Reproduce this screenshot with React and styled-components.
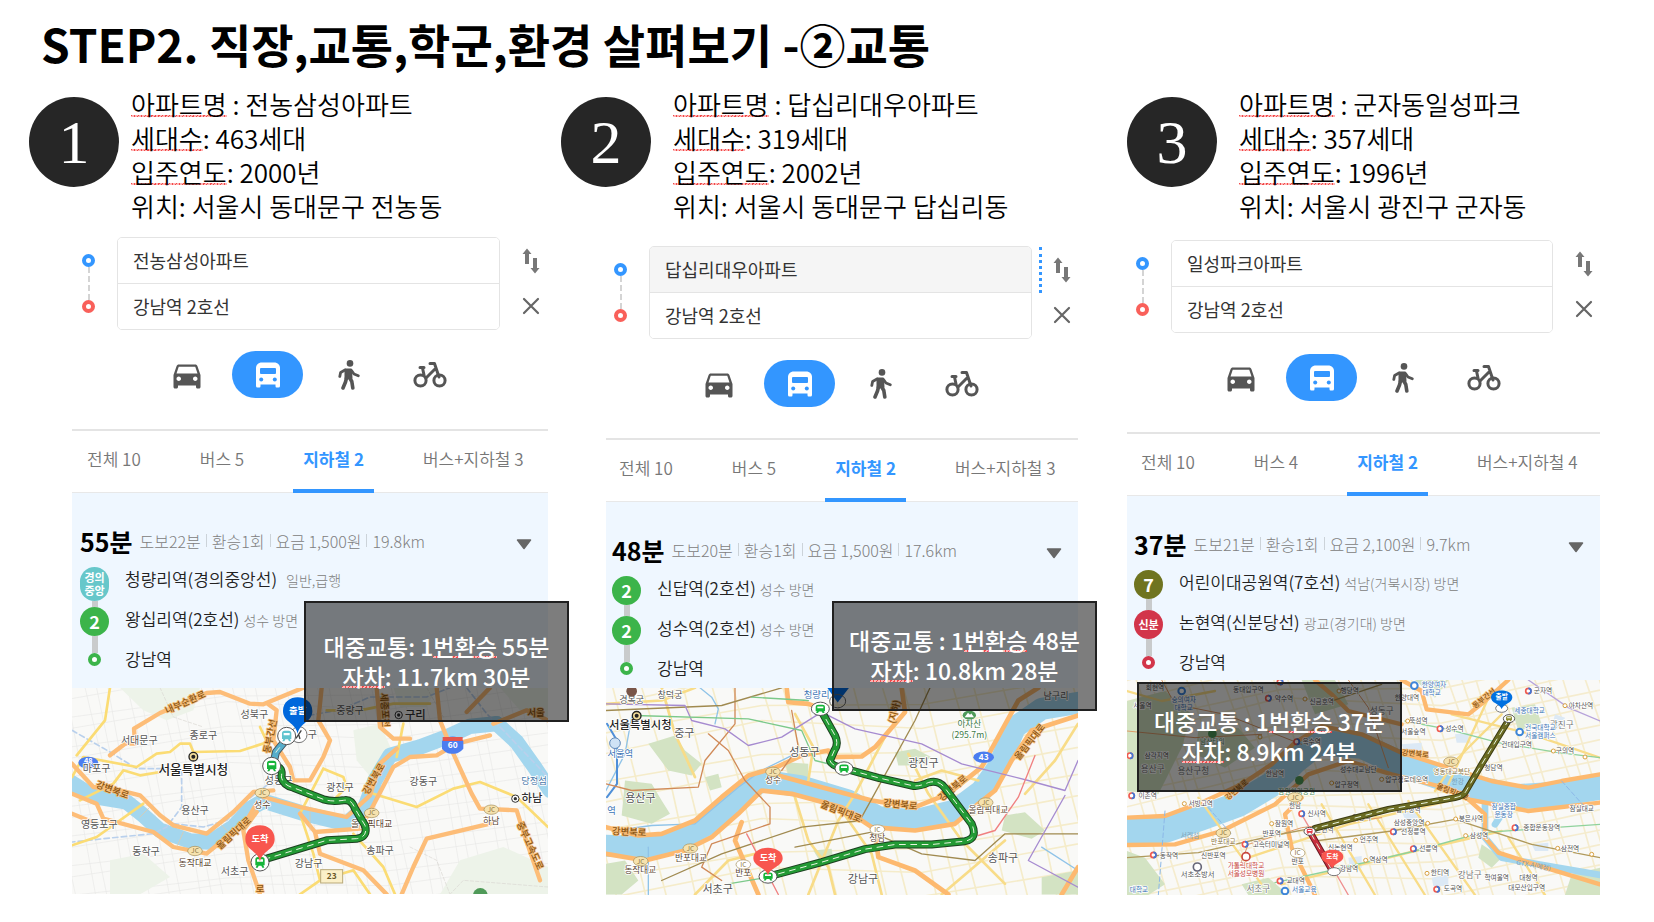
import React from "react";
import styled, { createGlobalStyle } from "styled-components";
import { MdDirectionsCar } from "react-icons/md";

const GlobalStyle = createGlobalStyle`
  * { box-sizing: border-box; }
  body {
    margin: 0;
    background: #fff;
    color: #000;
    font-family: "Noto Sans CJK KR", "Noto Sans", sans-serif;
  }
  button, input { font: inherit; color: inherit; border: 0; padding: 0; margin: 0; background: none; }
  button { cursor: pointer; }
`;

const Slide = styled.main`
  padding: 11px 0 24px 29px;
`;

const Title = styled.h1`
  margin: 0 0 12px 12px;
  font-size: 46px;
  line-height: 64px;
  font-weight: 700;
  white-space: nowrap;
`;

const Columns = styled.div`
  display: grid;
  grid-template-columns: 532fr 566fr 527fr;
  align-items: start;
`;

const Column = styled.section`
  min-width: 0;
`;

const Heading = styled.header`
  display: flex;
  align-items: flex-start;
  gap: ${(p) => p.$gap}px;
`;

const NumberDisc = styled.div`
  flex: none;
  display: flex;
  align-items: center;
  justify-content: center;
  width: 90px;
  height: 90px;
  margin-top: 10px;
  border-radius: 50%;
  background: #262626;
  color: #fff;
  font-family: "Liberation Serif", serif;
  font-size: 62px;
  line-height: 90px;
`;

const Facts = styled.div`
  font-size: 26px;
  line-height: 34px;
  font-weight: 350;
  white-space: nowrap;
`;

const Fact = styled.p`
  margin: 0;
`;

const Marked = styled.span`
  background: repeating-linear-gradient(120deg, #f04a4a 0 1px, #ffb4b4 1px 3px) 0 calc(100% - 5px) / 100% 2px no-repeat;
`;

const Panel = styled.div`
  position: relative;
  margin: ${(p) => p.$margin};
`;

const Search = styled.form`
  display: grid;
  grid-template-columns: ${(p) => 45 - p.$crop}px 1fr ${(p) => 48 - p.$crop}px;
  height: 93px;
`;

const Stops = styled.div`
  display: flex;
  flex-direction: column;
  align-items: center;
  justify-content: center;
  padding-right: ${(p) => 12 + p.$crop}px;
`;

const Ring = styled.span`
  flex: none;
  width: 13px;
  height: 13px;
  border: 4px solid ${(p) => p.$color};
  border-radius: 50%;
  background: #fff;
`;

const Dashes = styled.span`
  height: 33px;
  border-left: 2px dashed #d4d4d4;
`;

const Fields = styled.div`
  display: flex;
  flex-direction: column;
  border: 1px solid #e4e4e4;
  border-radius: 5px;
  overflow: hidden;
`;

const Field = styled.input`
  flex: 1;
  width: 100%;
  min-height: 0;
  padding: 0 15px 2px;
  font-size: 18px;
  line-height: 26px;
  color: #333;
  background: ${(p) => (p.$active ? "#f5f5f5" : "#fff")};
  & + & { border-top: 1px solid #e4e4e4; }
`;

const Actions = styled.div`
  display: grid;
  grid-template-rows: 1fr 1fr;
  padding: 1px 0 1px 7px;
`;

const Action = styled.button`
  display: flex;
  align-items: center;
  justify-content: center;
  padding-left: 4px;
  border-left: 3px dotted ${(p) => (p.$active ? "#3396ff" : "transparent")};
`;

const Modes = styled.div`
  display: flex;
  gap: 10px;
  padding: 21px 0 31px ${(p) => 79 - p.$crop}px;
`;

const Mode = styled.button`
  display: flex;
  align-items: center;
  justify-content: center;
  width: 71px;
  height: 47px;
  border-radius: 24px;
  background: ${(p) => (p.$active ? "#3396ff" : "transparent")};
  color: ${(p) => (p.$active ? "#fff" : "#555")};
`;

const Tabs = styled.div`
  display: flex;
  gap: 39px;
  height: 64px;
  padding-left: ${(p) => 5 - p.$crop}px;
  border-top: 2px solid #e4e4e4;
  border-bottom: 1px solid #e8e8e8;
`;

const Tab = styled.button`
  height: 62px;
  padding: 0 10px 2px;
  font-size: 17px;
  line-height: 24px;
  white-space: nowrap;
  font-weight: ${(p) => (p.$active ? 700 : 350)};
  color: ${(p) => (p.$active ? "#3396ff" : "#777")};
  border-bottom: 4px solid ${(p) => (p.$active ? "#3396ff" : "transparent")};
`;

const Result = styled.div`
  padding: 23px 0 ${(p) => p.$bottom}px ${(p) => 8 - p.$crop}px;
  background: #eff7ff;
`;

const Summary = styled.div`
  display: flex;
  align-items: center;
  height: 51px;
  padding: 0 16px 2px 0;
  white-space: nowrap;
`;

const Minutes = styled.strong`
  font-size: 25px;
  line-height: 32px;
  font-weight: 700;
`;

const Meta = styled.ul`
  display: flex;
  flex: 1;
  margin: 0;
  padding: 0 0 0 7px;
  list-style: none;
  font-size: 16px;
  line-height: 24px;
  font-weight: 300;
  color: #808080;
`;

const MetaItem = styled.li`
  display: flex;
  align-items: center;
  & + &::before {
    content: "";
    height: 13px;
    margin: 0 5px;
    border-left: 1px solid #ccd3d9;
  }
`;

const Expand = styled.button`
  display: flex;
  padding-top: 8px;
`;

const Steps = styled.ol`
  margin: 0;
  padding: 0;
  list-style: none;
`;

const Step = styled.li`
  display: flex;
  height: ${(p) => (p.$last ? 30 : 40)}px;
  gap: 16px;
  white-space: nowrap;
`;

const Track = styled.div`
  display: flex;
  flex-direction: column;
  align-items: center;
  width: 29px;
`;

const Line = styled.span`
  flex: ${(p) => (p.$short ? "0 0 6px" : "1")};
  width: 6px;
  background: #c9cbcc;
`;

const Badge = styled.span`
  display: flex;
  flex: none;
  align-items: center;
  justify-content: center;
  width: 29px;
  height: ${(p) => (p.$tall ? 34 : 29)}px;
  border-radius: 15px;
  background: ${(p) => p.$color};
  color: #fff;
  font-size: ${(p) => (p.$small ? 11 : 18)}px;
  line-height: 13px;
  font-weight: 700;
  text-align: center;
  white-space: pre;
`;

const Station = styled.span`
  font-size: 17px;
  line-height: 24px;
  font-weight: 350;
  color: #222;
`;

const Toward = styled.small`
  margin-left: ${(p) => (p.$wide ? 9 : 4)}px;
  font-size: 14px;
  font-weight: 300;
  color: #808080;
`;

const MapDrawing = styled.svg`
  display: block;
  width: 100%;
  height: ${(p) => p.$height}px;
  background: #f9f9f7;
`;

const Note = styled.aside`
  position: absolute;
  left: ${(p) => p.$left}px;
  bottom: ${(p) => p.$bottom}px;
  display: flex;
  flex-direction: column;
  align-items: center;
  justify-content: center;
  width: 265px;
  height: ${(p) => p.$height}px;
  padding-bottom: 2px;
  border: 2px solid #202020;
  background: rgba(0, 0, 0, 0.51);
  color: #fff;
  font-size: 23px;
  line-height: 30px;
  font-weight: 500;
  white-space: nowrap;
`;

/* ---------- icons ---------- */

const SwapIcon = () => (
  <svg width="18" height="26" viewBox="0 0 18 26" fill="#777" aria-hidden="true">
    <path d="M5 0.500 L9.500 6 H7 V16 H3 V6 H0.500 Z M13 25.500 L8.500 20 H11 V10 H15 V20 H17.500 Z" />
  </svg>
);

const CloseIcon = () => (
  <svg width="18" height="18" viewBox="0 0 18 18" stroke="#666" strokeWidth="2.200" strokeLinecap="round" aria-hidden="true">
    <path d="M2 2 L16 16 M16 2 L2 16" />
  </svg>
);

const BusIcon = () => (
  <svg width="24" height="26" viewBox="0 0 24 26" aria-hidden="true">
    <path fill="#fff" d="M6 0.500 H18 C22 0.500 24 3 24 6 V24 Q24 25.500 22.500 25.500 H20.500 Q19.500 25.500 19.500 24 V22.500 H4.500 V24 Q4.500 25.500 3.500 25.500 H1.500 Q0 25.500 0 24 V6 C0 3 2 0.500 6 0.500 Z" />
    <rect x="4" y="6" width="16" height="6" rx="1" fill="#3396ff" />
    <circle cx="5.200" cy="17.500" r="2" fill="#3396ff" />
    <circle cx="18.800" cy="17.500" r="2" fill="#3396ff" />
  </svg>
);

const WalkIcon = () => (
  <svg width="22" height="30" viewBox="0 0 22 30" fill="none" stroke="#555" strokeLinecap="round" strokeLinejoin="round" aria-hidden="true">
    <circle cx="12" cy="3.400" r="3.300" fill="#555" stroke="none" />
    <path fill="#555" strokeWidth="2" d="M7.500 9.500 H13 L13.500 18 L7.500 18.500 Z" />
    <path strokeWidth="2.800" d="M7 10 L2.600 12.500 L1.800 16.500 M13.500 10.500 L16 14 L20.300 15.800" />
    <path strokeWidth="3.600" d="M8.500 18 L7.500 22 L5 28 M11.500 17.500 L13.800 21.500 L14.800 28" />
  </svg>
);

const BikeIcon = () => (
  <svg width="36" height="28" viewBox="0 0 36 28" fill="none" stroke="#555" strokeWidth="3" strokeLinecap="round" strokeLinejoin="round" aria-hidden="true">
    <circle cx="8.500" cy="19.500" r="5.600" />
    <circle cx="27.500" cy="19.500" r="5.600" />
    <path d="M8 6.500 H12 M10.500 7 L12 14 M14 17 L23 8 M18 2.500 H22.500 L27 16" />
  </svg>
);

const ArrowIcon = () => (
  <svg width="16" height="11" viewBox="0 0 16 11" aria-hidden="true">
    <path d="M1.500 1 H14.500 L8 9.500 Z" fill="#666" stroke="#666" strokeWidth="1.500" strokeLinejoin="round" />
  </svg>
);

/* ---------- map pieces ---------- */

const Roads = ({ list, color, width, dash }) => (
  <g fill="none" stroke={color} strokeWidth={width} strokeLinecap="round" strokeLinejoin="round" strokeDasharray={dash}>
    {list.map((d) => (
      <path key={d} d={d} />
    ))}
  </g>
);

const Labels = ({ list, color = "#555", size = 30, weight = 400, halo = "#fff" }) => (
  <g fill={color} fontSize={size} fontWeight={weight} textAnchor="middle" stroke={halo} strokeWidth="5" paintOrder="stroke" strokeLinejoin="round">
    {list.map(([x, y, text, turn]) => (
      <text key={`${x}-${y}`} x={x} y={y} transform={turn ? `rotate(${turn} ${x} ${y})` : undefined}>
        {text}
      </text>
    ))}
  </g>
);

const Streets = ({ color, width, step, tilt }) => {
  const lines = [];
  for (let i = -6; i < 1700 / step + 6; i += 1) {
    const bend = ((i * 37) % 23) - 11;
    const x = i * step + bend;
    lines.push(`M${x - tilt} 0 L${x + bend} 330 L${x + tilt} 700`);
  }
  for (let j = -5; j < 900 / step + 3; j += 1) {
    const bend = ((j * 29) % 19) - 9;
    const y = j * step + bend;
    lines.push(`M0 ${y + tilt} L500 ${y + bend * 2} L980 ${y - bend} L1500 ${y - tilt}`);
  }
  return <Roads list={lines} color={color} width={width} />;
};

const Route = ({ d, color, edge, width = 18 }) => (
  <g fill="none" strokeLinejoin="round" strokeLinecap="round">
    <path d={d} stroke={edge} strokeWidth={width + 6} />
    <path d={d} stroke={color} strokeWidth={width} />
    <path d={d} stroke="#e8f5e0" strokeWidth="3" strokeDasharray="20 14" strokeLinecap="butt" />
  </g>
);

const StopMark = ({ x, y, color = "#16b53a", rx = 27, ry = 26 }) => (
  <g>
    <ellipse cx={x} cy={y} rx={rx} ry={ry} fill="#fff" stroke="#555" strokeWidth="3" />
    <path transform={`translate(${x} ${y}) scale(${rx / 27} ${ry / 26})`} fill={color} d="M-14 -8 Q-14 -16 -6 -16 H6 Q14 -16 14 -8 V9 H10 L13 16 H7 L4 10 H-4 L-7 16 H-13 L-10 9 H-14 Z M-9 -9 V-2 H9 V-9 Z" fillRule="evenodd" />
  </g>
);

const Pin = ({ x, y, color, label, size = 28, w = 44, h = 110 }) => (
  <g>
    <path
      fill={color}
      d={`M${x} ${y} C${x - 6} ${y - h * 0.3} ${x - w} ${y - h * 0.32} ${x - w} ${y - h * 0.62} C${x - w} ${y - h * 1.12} ${x + w} ${y - h * 1.12} ${x + w} ${y - h * 0.62} C${x + w} ${y - h * 0.32} ${x + 6} ${y - h * 0.3} ${x} ${y} Z`}
    />
    <text x={x} y={y - h * 0.62 + size * 0.3} fill="#fff" fontSize={size} fontWeight="700" textAnchor="middle">
      {label}
    </text>
  </g>
);

const Junctions = ({ list }) => (
  <g textAnchor="middle" fontSize="20" fill="#8a7440">
    {list.map(([x, y, text]) => (
      <g key={`${x}-${y}`}>
        <ellipse cx={x} cy={y} rx="22" ry="14" fill={text === "JC" ? "#f6e2ae" : "#fff"} stroke="#a08b58" strokeWidth="2" />
        <text x={x} y={y + 7}>{text}</text>
      </g>
    ))}
  </g>
);

const Patches = ({ list, color }) => (
  <g fill={color}>
    {list.map((d) => (
      <path key={d} d={d} />
    ))}
  </g>
);

const CityHall = ({ x, y }) => (
  <g>
    <circle cx={x} cy={y} r="13" fill="#f2dc9a" stroke="#222" strokeWidth="4" />
    <circle cx={x} cy={y} r="6" fill="#222" />
  </g>
);

const MapWide = () => (
  <MapDrawing $height={206} viewBox="36 22 1428 620" preserveAspectRatio="xMidYMid slice" role="img" aria-label="전농삼성아파트에서 강남역까지의 경로 지도">
    <Streets color="#e9e9e7" width={2} step={44} tilt={70} />
    <Patches
      color="#edf3e9"
      list={[
        "M180 22 H420 L400 90 L320 120 L250 90 Z",
        "M880 150 L960 130 L1000 220 L940 300 L890 240 Z",
        "M1000 22 H1130 L1100 80 H1020 Z",
        "M1200 540 L1330 500 L1464 560 V642 H1140 Z",
        "M150 540 L250 520 L330 590 L240 642 H150 Z",
        "M1320 22 H1464 V110 L1380 90 Z",
      ]}
    />
    <Roads
      color="#a3d6ee"
      width={46}
      list={[
        "M10 292 L100 348 L200 365 L250 405 L300 450 L390 482 L450 485 L520 440 L570 385 L610 362 L740 402 L860 430 L915 380 L945 300 L990 225 L1080 200 L1160 170 L1230 138 L1310 130",
        "M1310 130 L1370 185 L1420 255 L1470 330",
      ]}
    />
    <Roads color="#b9d0ec" width={5} dash="16 10" list={["M36 150 L150 215 L230 265 L365 265 V380 L320 440 L280 460 L180 470 L36 485", "M340 430 L430 440 L500 420 L560 360 L640 300", "M860 80 L930 50 H1100 L1170 22", "M1220 22 L1280 100 L1330 150 L1464 290", "M720 110 L860 85"]} />
    <Roads color="#d9d7d2" width={2} dash="10 6" list={["M300 22 L340 110 L430 140", "M1050 500 L1130 540 L1170 642", "M1464 620 L1210 600 L1170 642", "M1100 22 L1150 110"]} />
    <Roads
      color="#fbdc74"
      width={8}
      list={[
        "M150 22 L135 120 L50 225",
        "M36 290 L70 230 L230 260 L290 220 L330 215 L360 190 H390 L400 215 L540 212 L640 180",
        "M60 360 L160 310 L190 270 L240 285 L300 275",
        "M36 495 L110 470 L250 370",
        "M640 225 L600 140",
        "M790 265 L850 290 L860 320 L820 360",
        "M790 265 L720 400 L760 520 L780 600 L720 642",
        "M880 460 L970 560 L1005 642",
        "M940 340 L1070 380 L1180 325 L1260 305 L1370 350 L1464 440",
        "M800 90 H900 L1000 70 H1110",
        "M1030 130 L1010 230",
        "M780 600 L880 570 L930 642",
      ]}
    />
    <Roads
      color="#fdbd78"
      width={13}
      list={[
        "M150 225 L195 190 H225 L222 145 L300 98 L440 38 L480 35 L570 70 L610 72 L730 22",
        "M625 72 L650 90 L640 180 L690 260 L700 300 L750 300 L790 230 L810 180 L775 120 L785 22",
        "M36 250 L100 320 L180 330 L240 345 L300 405 L340 435 L440 460 L520 395 L580 335 L640 330",
        "M36 340 L110 370 L130 415 L280 455 L340 500 L440 520 L560 420 L590 370",
        "M36 400 L110 430",
        "M610 350 L720 380 L860 410 L930 345 L960 250 L1010 205",
        "M720 400 L765 455 L900 445 L940 375 L1000 260 L1050 230 L1130 225 L1190 190 L1290 165",
        "M765 455 L780 520 L910 570 L980 642",
        "M590 395 L550 450 L565 540 L600 642",
        "M1130 22 L1140 120 L1180 220 L1235 340 L1260 385 L1370 390 L1395 470 L1440 600",
        "M1290 430 L1100 475 L1060 560 L1025 642",
        "M950 22 L960 140 L1000 175 H1050",
        "M1220 95 L1290 22",
        "M1300 130 L1400 90 L1464 120",
      ]}
    />
    <Roads color="#e8c9a0" width={2} list={["M750 395 V450", "M240 410 L270 380", "M480 430 L520 470", "M370 455 L350 500"]} />
    <Labels color="#8a5412" size={28} weight={500} halo="#f7c07c" list={[[380, 75, "내부순환로", -24], [154, 338, "강변북로", 20], [528, 466, "올림픽대로", -42], [950, 300, "강변북로", -60], [640, 170, "동부간선", -78], [965, 90, "세종포천", 86], [1402, 500, "중부고속도로", 66], [1428, 106, "서울"], [600, 634, "로"]]} />
    <ellipse cx="85" cy="247" rx="30" ry="18" fill="#4b7df0" />
    <text x="85" y="252" fill="#fff" fontSize="22" fontWeight="700" textAnchor="middle">48</text>
    <Labels list={[[583, 112, "성북구"], [430, 175, "종로구"], [238, 192, "서대문구"], [110, 276, "마포구"], [405, 402, "용산구"], [118, 443, "영등포구"], [258, 524, "동작구"], [524, 584, "서초구"], [746, 560, "강남구"], [840, 332, "광진구"], [1090, 314, "강동구"], [960, 520, "송파구"], [656, 312, "성동구"], [870, 102, "중랑구"], [757, 172, "구"]]} />
    <Labels color="#5b4632" size={27} list={[[607, 382, "성수"], [405, 556, "동작대교"], [1294, 432, "하남"], [935, 440, "올림픽대교"]]} />
    <Labels color="#4a78a8" size={28} list={[[1422, 312, "당정섬"]]} />
    <Labels color="#222" size={38} weight={500} list={[[400, 280, "서울특별시청"]]} />
    <Labels color="#333" size={34} weight={500} list={[[1416, 366, "하남"], [1066, 115, "구리"]]} />
    <g fill="#fff" stroke="#333" strokeWidth="3">
      <circle cx="1366" cy="355" r="11" />
      <circle cx="1016" cy="104" r="11" />
    </g>
    <g fill="#333">
      <circle cx="1366" cy="355" r="5" />
      <circle cx="1016" cy="104" r="5" />
    </g>
    <CityHall x={400} y={229} />
    <Junctions list={[[607, 338, "JC"], [405, 512, "JC"], [935, 398, "JC"], [1294, 388, "JC"]]} />
    <path d="M1146 182 Q1178 155 1210 182 V205 Q1195 222 1178 220 Q1160 222 1146 205 Z" fill="#4b7df0" />
    <path d="M1148 170 H1208 V182 H1148 Z" fill="#e4574d" />
    <text x="1178" y="204" fill="#fff" fontSize="25" fontWeight="700" textAnchor="middle">60</text>
    <rect x="782" y="568" width="66" height="40" fill="#fbf0c8" stroke="#b8a878" strokeWidth="3" />
    <text x="815" y="597" fontSize="25" fontWeight="700" textAnchor="middle" fill="#6b5a2a">23</text>
    <circle cx="1261" cy="645" r="22" fill="#4f9a58" />
    <Route d="M640 250 L648 215 L685 170" color="#56aecb" edge="#45545e" />
    <Route d="M645 258 Q670 260 664 290 Q670 315 700 322 L790 357 Q815 365 850 360 Q875 355 885 385 L915 435 Q925 470 890 475 L800 480 L620 535" color="#239a34" edge="#1c4020" />
    <circle cx="717" cy="163" r="24" fill="#fff" stroke="#777" strokeWidth="3" />
    <path d="M724 150 L716 162 L720 176 M716 162 L708 174" fill="none" stroke="#444" strokeWidth="4" />
    <StopMark x={680} y={167} color="#62c5cf" />
    <StopMark x={635} y={257} />
    <StopMark x={600} y={546} />
    <Pin x={713} y={160} color="#0068dc" label="출발" />
    <Pin x={600} y={544} color="#f8564e" label="도착" />
  </MapDrawing>
);

const MapNear = () => (
  <MapDrawing $height={207} viewBox="33 22 1416 622" preserveAspectRatio="xMidYMid slice" role="img" aria-label="답십리대우아파트에서 강남역까지의 경로 지도">
    <Streets color="#f5ecca" width={5} step={72} tilt={90} />
    <Patches
      color="#d3e3c3"
      list={[
        "M160 190 L240 165 L270 210 L320 250 L290 285 L220 270 Z",
        "M90 300 L170 310 L200 360 L225 400 L170 430 L80 405 Z",
        "M570 245 L640 250 V305 L580 285 Z",
        "M900 215 L960 205 L1010 230 L960 255 H910 Z",
        "M1230 405 L1290 395 L1350 450 L1310 475 L1220 450 Z",
        "M33 550 L90 540 L130 600 L80 642 H33 Z",
        "M330 290 L370 280 L380 320 L345 330 Z",
        "M1340 590 L1449 570 V642 H1340 Z",
        "M655 510 L710 505 L715 540 L670 535 Z",
      ]}
    />
    <Roads color="#a3d6ee" width={66} list={["M10 495 L170 500 L250 480 L340 430 L420 360 L500 300 L620 318 L760 360 L850 410 L960 420 L1080 390 L1160 330 L1210 260 L1260 140 L1340 85 L1460 65"]} />
    <Roads color="#8fc3e8" width={4} list={["M33 330 L90 220 L110 110", "M60 450 L170 435 L300 430 L430 320 L500 270 L600 220", "M160 500 V642", "M315 22 L350 50 L370 85 L360 130", "M1449 570 L1340 500"]} />
    <Roads color="#4f8fd8" width={6} list={["M36 130 L66 180 V310 L36 350"]} />
    <Roads
      color="#f8dc88"
      width={8}
      list={["M880 150 L780 340 L730 420 L640 642", "M940 220 L1000 340 L1100 480 L1230 610", "M640 300 L655 200 L600 100", "M600 350 L640 480 L700 560 L720 642", "M740 390 L830 520 L860 642", "M1230 480 L1040 642", "M33 70 L200 60 L300 22", "M200 22 L240 160 L300 290", "M960 300 L1040 270 L1150 300", "M1449 130 L1380 240 L1290 340", "M300 642 L400 540 L520 510"]}
    />
    <Roads
      color="#fdb96f"
      width={14}
      list={[
        "M33 440 L130 465 L200 460 L300 420 L380 350 L460 285 L540 262 L620 225 L700 210 L710 230 L800 228 L840 200 L930 95 L920 22",
        "M33 520 L150 540 L270 510 L350 470 L430 400 L500 330 L590 340 L740 380 L830 440 L960 450 L1080 430 L1150 370 L1200 330 L1250 240 L1310 150 L1449 105",
        "M530 280 L680 320 L830 360 L960 380 L1060 340 L1160 260 L1220 150 L1270 60 L1330 22",
        "M575 22 L580 65 L640 70 L680 85",
        "M440 425 L420 480 L490 642",
        "M840 455 L850 530 L960 570 L1060 642",
        "M1449 560 L1400 642",
      ]}
    />
    <Roads color="#d08a58" width={4} list={["M420 22 V130 L330 240 L310 320 L110 330 L33 310", "M340 160 L400 210 L450 300 L525 380 V430 L350 490 L320 560 L380 600", "M590 90 L610 200 L560 270"]} />
    <Roads color="#a08a50" width={4} list={["M33 90 L380 75 L560 22", "M1005 22 L960 120 L800 410", "M200 600 L380 520 L620 440 L800 420", "M600 500 L830 455 L980 520 L1140 540 L1230 460 H1449"]} />
    <Roads color="#a68bd0" width={4} list={["M33 70 L270 75 L290 120 L390 145 L460 195 L560 170 L680 95 L780 145 L980 190 L1100 250 L1300 300 L1410 330 L1449 240", "M1410 345 L1300 540 L1449 620"]} />
    <Roads color="#7cc98a" width={4} list={["M120 105 L460 115 L620 150 L660 240 L720 255", "M400 610 L520 590", "M470 50 L640 60"]} />
    <Roads color="#f08080" width={4} list={["M1320 225 L1270 350 L1200 450 L1150 465", "M455 460 L550 642"]} />
    <Labels color="#8a5412" size={28} weight={500} halo="#f7c07c" list={[[102, 464, "강변북로", 3], [735, 402, "올림픽대로", 22], [915, 382, "강변북로", 6], [1080, 330, "강변북로", -40], [1312, 190, "올림픽대로", -52], [908, 96, "(지하)", -76]]} />
    <Labels size={33} list={[[268, 170, "중구"], [136, 364, "용산구"], [628, 226, "성동구"], [985, 258, "광진구"], [1224, 544, "송파구"], [804, 608, "강남구"], [368, 638, "서초구"]]} />
    <Labels size={27} list={[[110, 68, "경복궁"], [225, 53, "창덕궁"], [1383, 56, "남구리"]]} />
    <Labels color="#5b4632" size={26} list={[[534, 308, "성수"], [288, 540, "반포대교"], [136, 576, "동작대교"], [445, 586, "반포"], [847, 480, "청담"], [1180, 398, "올림픽대교"]]} />
    <Labels color="#3b74b5" size={28} list={[[76, 228, "서울역"], [665, 52, "청량리"], [50, 400, "역"]]} />
    <Labels color="#3d7a45" size={26} list={[[1123, 140, "아차산"], [1123, 172, "(295.7m)"]]} />
    <Labels color="#222" size={34} weight={500} list={[[136, 145, "서울특별시청"]]} />
    <CityHall x={125} y={106} />
    <Junctions list={[[534, 274, "JC"], [286, 504, "JC"], [137, 542, "JC"], [1172, 366, "JC"], [445, 552, "IC"], [847, 447, "IC"]]} />
    <ellipse cx="1123" cy="104" rx="20" ry="13" fill="#4f9a58" />
    <path d="M1109 110 L1119 97 L1125 103 L1129 99 L1137 110 Z" fill="#fff" />
    <circle cx="110" cy="32" r="16" fill="#795548" />
    <ellipse cx="1166" cy="230" rx="31" ry="17" fill="#4b7df0" />
    <text x="1166" y="239" fill="#fff" fontSize="25" fontWeight="700" textAnchor="middle">43</text>
    <circle cx="60" cy="188" r="16" fill="#cfe2f5" stroke="#5d87b8" strokeWidth="3" />
    <path d="M697 22 H762 L728 66 Z" fill="#0068dc" />
    <ellipse cx="728" cy="62" rx="24" ry="20" fill="none" stroke="#666" strokeWidth="3" />
    <Route d="M676 86 L720 165 Q732 190 718 210 L705 240 Q708 256 748 264 L850 292 L950 315 Q970 320 1000 306 Q1030 298 1048 320 L1130 430 Q1150 475 1110 482 L1010 492 L900 492 L810 506 L680 545 L520 588" color="#239a34" edge="#1c4020" />
    <StopMark x={676} y={85} ry={20} />
    <StopMark x={747} y={264} ry={20} />
    <StopMark x={519} y={588} ry={20} />
    <Pin x={519} y={585} color="#f8564e" label="도착" size={27} h={84} />
  </MapDrawing>
);

const MapDense = () => (
  <MapDrawing $height={215} viewBox="36 27 1419 645" preserveAspectRatio="xMidYMid slice" role="img" aria-label="일성파크아파트에서 강남역까지의 경로 지도">
    <Streets color="#f5ecce" width={5} step={52} tilt={110} />
    <Patches
      color="#d3e3c3"
      list={[
        "M36 90 L150 60 L230 130 L200 230 L130 370 L36 360 Z",
        "M250 180 L370 170 L420 230 L330 290 L240 250 Z",
        "M36 540 L90 560 L150 640 L100 672 H36 Z",
        "M1190 110 L1260 100 L1280 160 L1210 180 Z",
        "M560 27 H660 L700 100 L600 130 Z",
        "M900 27 H1000 L960 80 Z",
        "M1100 520 L1160 560 L1130 590 L1090 560 Z",
        "M1370 610 L1455 590 V672 H1350 Z",
        "M380 640 L460 620 L520 672 H400 Z",
      ]}
    />
    <Patches color="#dce9f5" list={["M860 220 L920 215 V245 H870 Z", "M1130 70 L1170 68 V95 H1135 Z", "M1320 130 L1350 140 L1340 170 H1310 Z", "M860 420 L900 410 L910 440 L870 445 Z", "M700 560 L740 555 V590 H705 Z", "M1250 520 L1300 515 V540 H1260 Z", "M1020 190 L1060 185 V215 H1025 Z", "M400 590 H450 V615 H405 Z", "M950 620 L1000 610 V645 H955 Z"]} />
    <Roads color="#a3d6ee" width={76} list={["M0 480 L150 478 L260 440 L370 400 L470 340 L540 270 L610 215 L740 225 L860 280 L980 320 L1080 350 L1200 378 L1320 370 L1480 345"]} />
    <Roads color="#a3d6ee" width={20} list={["M1110 400 V500 L1160 560 L1270 580 L1455 612", "M1180 400 L1140 460"]} />
    <Roads
      color="#f8dc88"
      width={7}
      list={["M1160 130 L1020 270 L960 360", "M1130 60 L1000 340", "M620 400 L780 672", "M760 400 L930 672", "M880 390 L1080 672", "M400 560 L700 460 L1000 390", "M500 640 L900 540 L1160 480", "M1180 500 L1290 672", "M1010 130 L1250 190 L1455 260", "M36 60 L140 90 L300 60", "M250 380 L440 640"]}
    />
    <Roads
      color="#fdb96f"
      width={13}
      list={[
        "M36 440 L150 435 L270 390 L380 340 L470 280 L540 215 L620 165 L740 190 L860 245 L1000 290 L1130 330 L1240 350 L1340 330 L1455 310",
        "M36 522 L180 520 L320 480 L480 400 L580 310 L700 270 L830 310 L970 345 L1060 385 L1110 430 L1110 500 L1150 545 L1290 590 L1455 640",
        "M860 27 L920 60 L935 115 L1060 130 L1110 90 L1180 27",
        "M560 380 L510 430 L530 530 L600 672",
        "M600 27 L650 70 L700 120 L860 160",
        "M1060 385 L1240 420 L1455 395",
      ]}
    />
    <Roads color="#dd9a68" width={3} list={["M140 27 L180 100 L330 130 L560 220", "M360 620 L400 520 L560 470 L800 440", "M700 27 L760 110 L820 290", "M36 180 L240 200 L440 190"]} />
    <Roads color="#8fd29c" width={4} list={["M480 635 L640 600 L900 540 L1100 485 L1455 460", "M870 150 L1000 175 L1150 215 L1330 245 L1455 260"]} />
    <Roads color="#b09a5c" width={4} list={["M36 560 L250 545 L470 495 L600 470", "M600 510 L830 480 L1020 445 L1250 520 L1455 560", "M620 100 L800 40"]} />
    <Roads color="#ef8f8f" width={4} list={["M560 430 L700 672"]} />
    <Roads color="#b7a3da" width={4} list={["M1240 27 L1360 110 L1455 150"]} />
    <Roads color="#8cb8e8" width={3} dash="14 8" list={["M150 420 L130 672", "M280 410 L350 490", "M1340 330 L1420 420"]} />
    <Labels color="#8a5412" size={22} weight={500} halo="#f7c07c" list={[[900, 256, "강변북로", 6], [1010, 370, "올림픽대로", 22], [1112, 88, "동부간선", -38], [370, 362, "강변북로", -40]]} />
    <Labels
      size={20}
      list={[[1284, 66, "군자역"], [1398, 112, "아차산역"], [1018, 180, "성수역"], [910, 156, "뚝섬역"], [895, 190, "서울숲역"], [1205, 228, "건대입구역"], [1350, 247, "구의역"], [876, 88, "한양대역"], [605, 436, "신사역"], [507, 466, "잠원역"], [470, 495, "반포역"], [468, 527, "고속터미널역"], [895, 490, "선정릉역"], [882, 463, "삼성중앙역"], [762, 514, "언주역"], [676, 538, "신논현역"], [940, 539, "선릉역"], [702, 599, "강남역"], [790, 574, "역삼역"], [1068, 450, "봉은사역"], [1280, 477, "종합운동장역"], [1092, 501, "삼성역"], [1365, 540, "삼전역"], [162, 560, "동작역"], [295, 562, "신반포역"], [542, 637, "교대역"], [1014, 660, "도곡역"], [975, 613, "한티역"], [1145, 626, "학여울역"], [1240, 626, "대청역"], [1235, 656, "대모산입구역"], [880, 424, "압구정역"], [1135, 297, "청담역"], [740, 446, "학동역"], [257, 404, "서빙고역"], [98, 380, "이촌역"], [120, 58, "회현역"], [82, 112, "서울역"], [400, 64, "동대입구역"], [507, 90, "약수역"], [620, 98, "신금호역"], [704, 66, "행당역"], [125, 262, "삼각지역"], [480, 316, "한남역"], [590, 220, "옥수역"], [695, 348, "압구정역"], [875, 334, "압구정로데오역"], [730, 302, "성수대교남단"], [540, 412, "한남"], [548, 580, "반포"], [628, 482, "논현역"], [1400, 420, "잠실대교"]]}
    />
    <Labels color="#777" size={26} list={[[113, 304, "용산구"], [235, 308, "용산구청"], [1340, 172, "광진구"], [1064, 620, "강남구"], [430, 662, "서초구"], [800, 128, "성동구"]]} />
    <Labels color="#8a7440" size={20} list={[[325, 518, "반포대교"], [1010, 308, "영동대교북단"]]} />
    <Labels color="#3b74b5" size={20} list={[[957, 48, "한양여자"], [950, 72, "대학교"], [1244, 126, "세종대학교"], [1276, 178, "건국대학교"], [1276, 202, "서울캠퍼스"], [1166, 414, "잠실종합"], [1166, 438, "운동장"], [568, 664, "서울교육"], [72, 662, "대학교"], [206, 92, "숭의여자"], [206, 116, "대학교"]]} />
    <Labels color="#7aa0b8" size={20} halo="none" list={[[1028, 338, "한강"], [225, 500, "서래섬"], [1255, 590, "GTX-A(예정)", 10]]} />
    <Labels color="#c8473f" size={20} list={[[393, 590, "가톨릭대학교"], [393, 614, "서울성모병원"]]} />
    <Labels color="#4d8a55" size={20} list={[[545, 370, "잠원한강공원"], [292, 218, "남산타워"]]} />
    <Labels size={22} list={[[248, 618, "서초소방서"]]} />
    <g strokeWidth="5" fill="#fff">
      {[[1240, 60], [975, 173], [560, 428], [835, 482], [390, 520], [895, 533], [1200, 470], [115, 552], [495, 630], [965, 655], [460, 82], [495, 33], [50, 374], [45, 254], [545, 212]].map(([x, y]) => (
        <g key={`${x}-${y}`}>
          <circle cx={x} cy={y} r="8" stroke="#ef5b50" />
          <path d={`M${x} ${y - 8} A8 8 0 0 1 ${x} ${y + 8}`} fill="none" stroke="#3f78d8" />
        </g>
      ))}
    </g>
    <g fill="#fff" stroke="#d8a040" strokeWidth="3">
      {[[1315, 240], [1410, 258], [1350, 104], [878, 150], [470, 458], [722, 508], [1022, 444], [1052, 494], [938, 457], [1328, 532], [752, 568], [936, 607], [1430, 550], [208, 398], [672, 60], [570, 84], [435, 198], [650, 336], [800, 325]].map(([x, y]) => (
        <circle key={`${x}-${y}`} cx={x} cy={y} r="6" />
      ))}
    </g>
    <g fill="#fff" stroke="#3f86d8" strokeWidth="6">
      <circle cx="898" cy="44" r="10" />
      <circle cx="1214" cy="183" r="10" />
      <circle cx="510" cy="660" r="10" />
      <circle cx="200" cy="60" r="10" />
    </g>
    <circle cx="393" cy="557" r="12" fill="#fff" stroke="#c8473f" strokeWidth="5" />
    <circle cx="553" cy="328" r="13" fill="#4f9a58" />
    <circle cx="292" cy="188" r="13" fill="#4f9a58" />
    <circle cx="247" cy="588" r="12" fill="#fff" stroke="#667" strokeWidth="5" />
    <Junctions list={[[325, 486, "JC"], [1008, 272, "JC"], [540, 379, "JC"], [548, 546, "IC"]]} />
    <Route d="M1182 145 L1100 280 L1052 362 Q1045 375 1020 380 L820 415 L600 472" color="#6b6b22" edge="#3c3c14" width={14} />
    <Route d="M588 488 L652 600" color="#c8303f" edge="#6b1a22" width={14} />
    <ellipse cx="1160" cy="112" rx="18" ry="12" fill="#fff" stroke="#777" strokeWidth="3" />
    <StopMark x={1182} y={143} color="#8a8a2a" rx={17} ry={12} />
    <StopMark x={584} y={481} color="#e03a48" rx={17} ry={12} />
    <ellipse cx="657" cy="602" rx="19" ry="12" fill="#fff" stroke="#777" strokeWidth="3" />
    <Pin x={1160} y={114} color="#0070e0" label="출발" size={20} w={32} h={56} />
    <Pin x={652} y={592} color="#f8564e" label="도착" size={20} w={33} h={56} />
  </MapDrawing>
);

/* ---------- data ---------- */

const apartments = [
  {
    id: 1,
    gap: 12,
    crop: 0,
    margin: "14px 13px 0 43px",
    name: "전농삼성아파트",
    homes: "463세대",
    year: "2000년",
    place: "서울시 동대문구 전농동",
    from: "전농삼성아파트",
    tabs: ["전체 10", "버스 5", "지하철 2", "버스+지하철 3"],
    minutes: "55분",
    meta: ["도보22분", "환승1회", "요금 1,500원", "19.8km"],
    steps: [
      { badge: "경의\n중앙", tall: true, small: true, color: "#67c7ca", station: "청량리역(경의중앙선)", toward: "일반,급행", wide: true },
      { badge: "2", color: "#3cb44a", station: "왕십리역(2호선)", toward: "성수 방면" },
    ],
    resultBottom: 11,
    Map: MapWide,
    note: { left: 232, bottom: 172, height: 121, colon: ": ", time: "55분", drive: "11.7km 30분" },
  },
  {
    id: 2,
    gap: 22,
    crop: 2,
    margin: "23px 49px 0 45px",
    name: "답십리대우아파트",
    homes: "319세대",
    year: "2002년",
    place: "서울시 동대문구 답십리동",
    from: "답십리대우아파트",
    active: true,
    tabs: ["전체 10", "버스 5", "지하철 2", "버스+지하철 3"],
    minutes: "48분",
    meta: ["도보20분", "환승1회", "요금 1,500원", "17.6km"],
    steps: [
      { badge: "2", color: "#3cb44a", station: "신답역(2호선)", toward: "성수 방면" },
      { badge: "2", color: "#3cb44a", station: "성수역(2호선)", toward: "성수 방면" },
    ],
    resultBottom: 2,
    Map: MapNear,
    note: { left: 226, bottom: 184, height: 110, colon: " : ", time: "48분", drive: "10.8km 28분" },
  },
  {
    id: 3,
    gap: 22,
    crop: 1,
    margin: "17px 54px 0 0",
    name: "군자동일성파크",
    homes: "357세대",
    year: "1996년",
    place: "서울시 광진구 군자동",
    from: "일성파크아파트",
    tabs: ["전체 10", "버스 4", "지하철 2", "버스+지하철 4"],
    minutes: "37분",
    meta: ["도보21분", "환승1회", "요금 2,100원", "9.7km"],
    steps: [
      { badge: "7", color: "#6f7420", station: "어린이대공원역(7호선)", toward: "석남(거북시장) 방면" },
      { badge: "신분", small: true, color: "#d2354a", station: "논현역(신분당선)", toward: "광교(경기대) 방면" },
    ],
    resultBottom: 0,
    Map: MapDense,
    note: { left: 10, bottom: 103, height: 110, colon: " : ", time: "37분", drive: "8.9km 24분" },
  },
];

const ApartmentColumn = ({ data }) => {
  const { crop, Map, note } = data;
  const endColor = data.steps[data.steps.length - 1].color;
  return (
    <Column>
      <Heading $gap={data.gap}>
        <NumberDisc>{data.id}</NumberDisc>
        <Facts>
          <Fact><Marked>아파트명</Marked> : {data.name}</Fact>
          <Fact><Marked>세대수</Marked>: {data.homes}</Fact>
          <Fact><Marked>입주연도</Marked>: {data.year}</Fact>
          <Fact>위치: {data.place}</Fact>
        </Facts>
      </Heading>

      <Panel $margin={data.margin}>
        <Search $crop={crop} onSubmit={(e) => e.preventDefault()}>
          <Stops $crop={crop}>
            <Ring $color="#3396ff" />
            <Dashes />
            <Ring $color="#f9605a" />
          </Stops>
          <Fields>
            <Field aria-label="출발지" defaultValue={data.from} $active={data.active} />
            <Field aria-label="도착지" defaultValue="강남역 2호선" />
          </Fields>
          <Actions>
            <Action type="button" aria-label="출발지와 도착지 바꾸기" $active={data.active}><SwapIcon /></Action>
            <Action type="button" aria-label="지우기"><CloseIcon /></Action>
          </Actions>
        </Search>

        <Modes $crop={crop}>
          <Mode type="button" aria-label="자동차"><MdDirectionsCar size={36} /></Mode>
          <Mode type="button" aria-label="대중교통" $active><BusIcon /></Mode>
          <Mode type="button" aria-label="도보"><WalkIcon /></Mode>
          <Mode type="button" aria-label="자전거"><BikeIcon /></Mode>
        </Modes>

        <Tabs $crop={crop} role="tablist">
          {data.tabs.map((tab, i) => (
            <Tab key={tab} type="button" role="tab" aria-selected={i === 2} $active={i === 2}>{tab}</Tab>
          ))}
        </Tabs>

        <Result $crop={crop} $bottom={data.resultBottom}>
          <Summary>
            <Minutes>{data.minutes}</Minutes>
            <Meta>
              {data.meta.map((item) => (
                <MetaItem key={item}>{item}</MetaItem>
              ))}
            </Meta>
            <Expand type="button" aria-label="펼치기"><ArrowIcon /></Expand>
          </Summary>
          <Steps>
            {data.steps.map((step) => (
              <Step key={step.station}>
                <Track>
                  <Badge $color={step.color} $tall={step.tall} $small={step.small}>{step.badge}</Badge>
                  <Line />
                </Track>
                <Station>
                  {step.station}
                  <Toward $wide={step.wide}>{step.toward}</Toward>
                </Station>
              </Step>
            ))}
            <Step $last>
              <Track>
                <Line $short />
                <Ring $color={endColor} />
              </Track>
              <Station>강남역</Station>
            </Step>
          </Steps>
        </Result>

        <Map />

        <Note $left={note.left} $bottom={note.bottom} $height={note.height}>
          <span>대중교통{note.colon}1<Marked>번환승</Marked> {note.time}</span>
          <span><Marked>자차</Marked>: {note.drive}</span>
        </Note>
      </Panel>
    </Column>
  );
};

export default function App() {
  return (
    <>
      <GlobalStyle />
      <Slide>
        <Title>STEP2. 직장,교통,학군,환경 살펴보기 -②교통</Title>
        <Columns>
          {apartments.map((data) => (
            <ApartmentColumn key={data.id} data={data} />
          ))}
        </Columns>
      </Slide>
    </>
  );
}
